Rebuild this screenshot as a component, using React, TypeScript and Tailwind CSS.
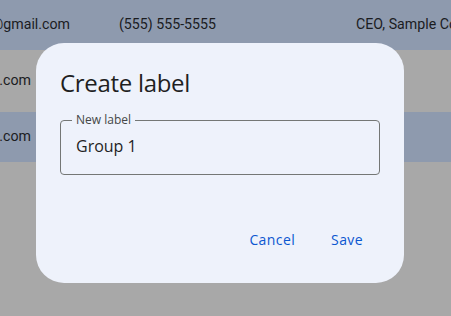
import React from 'react'

const App: React.FC = () => {
  return (
    <div className="relative w-[451px] h-[316px] overflow-hidden bg-[#a8a8a8] text-[#1b1c1f] font-['Roboto',sans-serif] text-[14.2px]">
      {/* rows behind the scrim */}
      <div className="flex flex-col">
        <div className="flex items-center h-[50px] bg-[#8e9aae] whitespace-nowrap">
          <div className="flex shrink-0 justify-end w-[70px] overflow-hidden">
            <span>sample@gmail.com</span>
          </div>
          <span className="shrink-0 ml-[49px]">(555) 555-5555</span>
          <span className="shrink-0 ml-[140px]">CEO, Sample Company</span>
        </div>
        <div className="flex items-center h-[62px] whitespace-nowrap">
          <div className="flex shrink-0 justify-end w-[31px] overflow-hidden">
            <span>sample@gmail.com</span>
          </div>
        </div>
        <div className="flex items-center h-[50px] bg-[#8e9aae] whitespace-nowrap">
          <div className="flex shrink-0 justify-end w-[31px] overflow-hidden">
            <span>sample@gmail.com</span>
          </div>
        </div>
      </div>

      {/* dialog */}
      <div className="absolute left-[36px] top-[43px] w-[368px] h-[240px] rounded-[28px] bg-[#eef2fb] flex flex-col px-6 pt-6 pb-6 font-['Open_Sans',sans-serif]">
        <h2 className="text-[24px] leading-8 text-[#1f1f1f] tracking-[-0.3px]">Create label</h2>
        <div className="relative mt-[21px] h-[55px] rounded-[4px] border border-[#747775] flex items-center px-[15px]">
          <span className="absolute left-[11px] -top-[9px] px-[4px] bg-[#eef2fb] text-[12px] leading-4 text-[#444746]">
            New label
          </span>
          <span className="text-[16px] text-[#1f1f1f] -mt-[3px]">Group 1</span>
        </div>
        <div className="mt-auto flex justify-end gap-3 pr-[5px]">
          <button className="h-10 px-3 text-[14px] font-medium tracking-[0.4px] text-[#0b57d0]">Cancel</button>
          <button className="h-10 px-3 text-[14px] font-medium tracking-[0.4px] text-[#0b57d0]">Save</button>
        </div>
      </div>
    </div>
  )
}

export default App
